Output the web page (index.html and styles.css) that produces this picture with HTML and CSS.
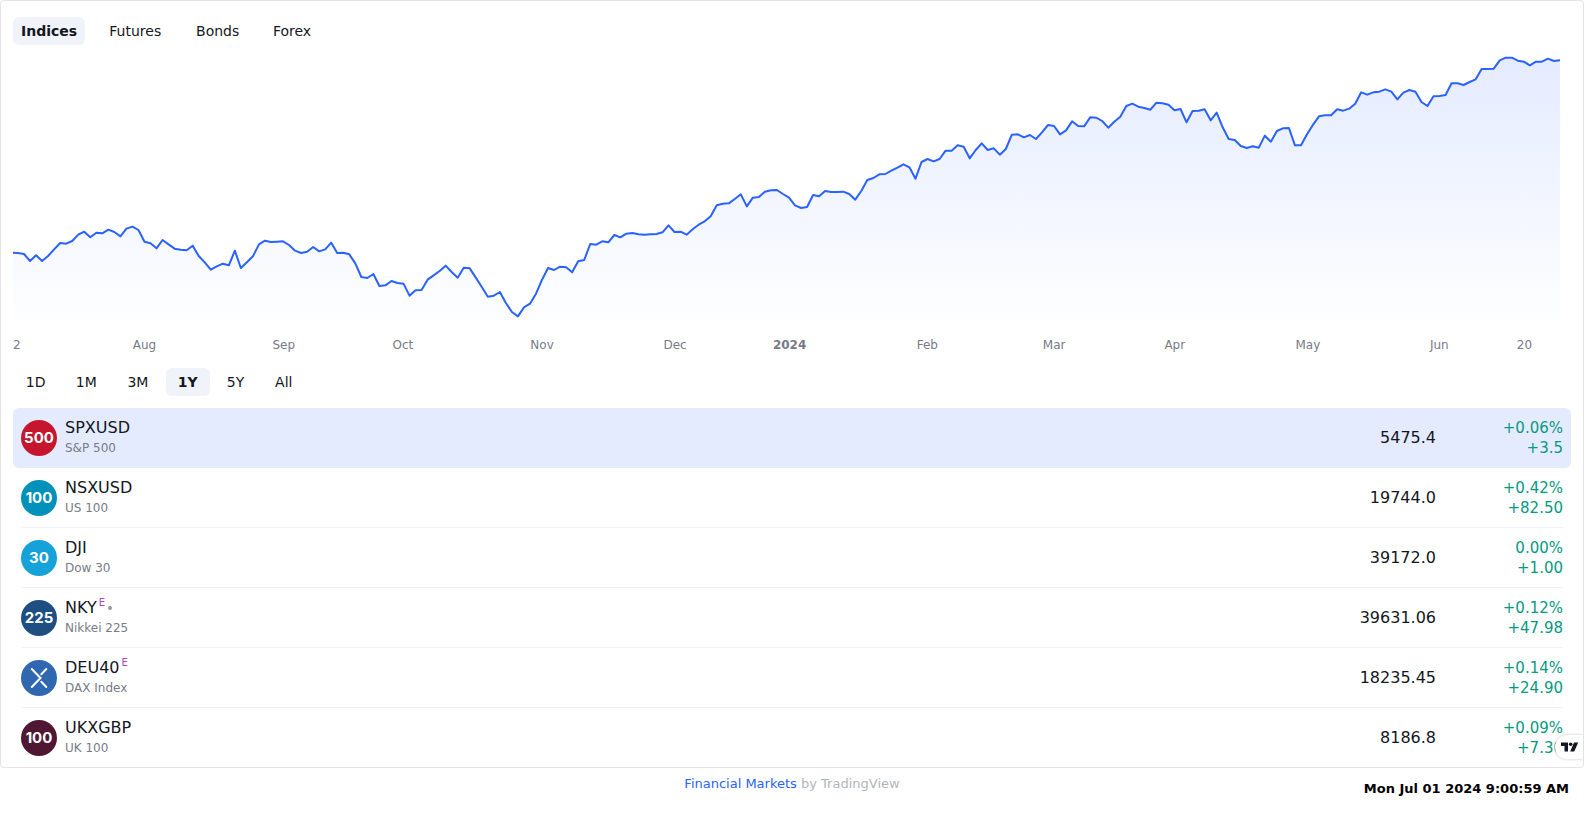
FILE: index.html
```html
<!DOCTYPE html>
<html lang="en">
<head>
<meta charset="utf-8">
<title>Financial Markets</title>
<link rel="stylesheet" href="styles.css">
</head>
<body>
<main class="widget">
  <nav class="tabs market-tabs" aria-label="Markets">
    <button class="tab is-active" data-label="Indices">Indices</button>
    <button class="tab" data-label="Futures">Futures</button>
    <button class="tab" data-label="Bonds">Bonds</button>
    <button class="tab" data-label="Forex">Forex</button>
  </nav>

  <section class="chart" aria-label="SPXUSD price">
    <svg class="plot" viewBox="0.17 135 256.83 861" preserveAspectRatio="none">
      <defs>
        <linearGradient id="fill" gradientUnits="userSpaceOnUse" x1="0" y1="135" x2="0" y2="996">
          <stop offset="0" stop-color="#2962ff" stop-opacity="0.13"/>
          <stop offset="1" stop-color="#2962ff" stop-opacity="0"/>
        </linearGradient>
      </defs>
      <path id="area" fill="url(#fill)"/>
      <path id="line" class="line"/>
    </svg>
    <svg class="axis">
      <text x="0" y="17" class="first">2</text>
      <text x="8.5%" y="17">Aug</text>
      <text x="17.5%" y="17">Sep</text>
      <text x="25.2%" y="17">Oct</text>
      <text x="34.2%" y="17">Nov</text>
      <text x="42.8%" y="17">Dec</text>
      <text x="50.2%" y="17" class="year">2024</text>
      <text x="59.1%" y="17">Feb</text>
      <text x="67.3%" y="17">Mar</text>
      <text x="75.1%" y="17">Apr</text>
      <text x="83.7%" y="17">May</text>
      <text x="92.2%" y="17">Jun</text>
      <text x="97.7%" y="17">20</text>
    </svg>
  </section>

  <div class="tabs range-tabs" role="group" aria-label="Range">
    <button class="tab" data-label="1D">1D</button>
    <button class="tab" data-label="1M">1M</button>
    <button class="tab" data-label="3M">3M</button>
    <button class="tab is-active" data-label="1Y">1Y</button>
    <button class="tab" data-label="5Y">5Y</button>
    <button class="tab" data-label="All">All</button>
  </div>

  <table class="quotes">
    <tbody>
      <tr class="is-active">
        <td class="symbol"><span class="logo spx">500</span><span class="names"><span class="ticker">SPXUSD</span><span class="desc">S&amp;P 500</span></span></td>
        <td class="price">5475.4</td>
        <td class="change"><span>+0.06%</span><span>+3.5</span></td>
      </tr>
      <tr>
        <td class="symbol"><span class="logo nsx">100</span><span class="names"><span class="ticker">NSXUSD</span><span class="desc">US 100</span></span></td>
        <td class="price">19744.0</td>
        <td class="change"><span>+0.42%</span><span>+82.50</span></td>
      </tr>
      <tr>
        <td class="symbol"><span class="logo dji">30</span><span class="names"><span class="ticker">DJI</span><span class="desc">Dow 30</span></span></td>
        <td class="price">39172.0</td>
        <td class="change"><span>0.00%</span><span>+1.00</span></td>
      </tr>
      <tr>
        <td class="symbol"><span class="logo nky">225</span><span class="names"><span class="ticker">NKY<span class="eod">E</span><span class="dot"></span></span><span class="desc">Nikkei 225</span></span></td>
        <td class="price">39631.06</td>
        <td class="change"><span>+0.12%</span><span>+47.98</span></td>
      </tr>
      <tr>
        <td class="symbol"><span class="logo dax"><svg width="36" height="36" viewBox="0 0 36 36" fill="none" stroke="#fff" stroke-width="2" stroke-linecap="round"><path d="M10.800 9l8.700 9L10.800 27M20.300 14.200L25.300 9M20.300 21.800L25.300 27"/></svg></span><span class="names"><span class="ticker">DEU40<span class="eod">E</span></span><span class="desc">DAX Index</span></span></td>
        <td class="price">18235.45</td>
        <td class="change"><span>+0.14%</span><span>+24.90</span></td>
      </tr>
      <tr>
        <td class="symbol"><span class="logo ukx">100</span><span class="names"><span class="ticker">UKXGBP</span><span class="desc">UK 100</span></span></td>
        <td class="price">8186.8</td>
        <td class="change"><span>+0.09%</span><span>+7.30</span></td>
      </tr>
    </tbody>
  </table>

  <a class="badge" href="#" aria-label="TradingView">
    <svg width="18" height="10" viewBox="0 0 18 10" fill="#131722"><path d="M0 0.500H7V9.500H3.500V4H0zM13 0.500H17.200L13.200 9.500H9.200z"/><circle cx="9.700" cy="2.300" r="1.800"/></svg>
  </a>
</main>

<footer class="footer">
  <p class="credit"><a href="#">Financial Markets</a> by TradingView</p>
  <time class="clock" datetime="2024-07-01T09:00:59">Mon Jul 01 2024 9:00:59 AM</time>
</footer>
<script src="chart.js"></script>
</body>
</html>
```
FILE: styles.css
```css
* {
  box-sizing: border-box;
}

body {
  margin: 0;
  background: #fff;
  color: #131722;
  font-family: "DejaVu Sans", sans-serif;
  font-size: 14px;
}

.widget {
  position: relative;
  padding: 16px 12px 0;
  border: 1px solid #e0e3eb;
  border-radius: 4px;
  overflow: hidden;
}

.tabs {
  display: flex;
}

.market-tabs {
  gap: 12px;
}

.range-tabs {
  gap: 4px;
  margin-bottom: 12px;
}

.tab {
  display: flex;
  flex-direction: column;
  align-items: center;
  height: 28px;
  padding: 0 8px;
  border: 0;
  border-radius: 6px;
  background: none;
  color: inherit;
  font: inherit;
  line-height: 28px;
  cursor: pointer;
}

.range-tabs .tab {
  padding: 0 12px;
}

/* Reserves the bold width so that tabs keep their place when selected */
.tab::after {
  content: attr(data-label);
  height: 0;
  overflow: hidden;
  visibility: hidden;
  font-weight: 700;
}

.tab.is-active {
  background: #f0f3fa;
  font-weight: 700;
}

.chart {
  margin-right: 11px;
}

.plot {
  display: block;
  width: 100%;
  height: 287px;
}

.line {
  fill: none;
  stroke: #2962ff;
  stroke-width: 2px;
  stroke-linejoin: round;
  vector-effect: non-scaling-stroke;
}

.axis {
  display: block;
  width: 100%;
  height: 36px;
  overflow: visible;
  fill: #787b86;
  font-size: 12px;
  text-anchor: middle;
}

.axis .first {
  text-anchor: start;
}

.axis .year {
  font-weight: 700;
}

.quotes,
.quotes tbody {
  display: block;
}

.quotes tr {
  display: grid;
  grid-template-columns: 1fr auto 127px;
  align-items: center;
  height: 60px;
  margin: 0 8px;
  border-bottom: 1px solid #f0f3fa;
}

.quotes tr.is-active {
  margin: 0;
  padding: 0 8px;
  border-color: #e5ebff;
  border-radius: 6px;
  background: #e5ebff;
}

.quotes tr:last-child {
  height: 59px;
  border-bottom: 0;
}

.quotes td {
  padding: 0;
}

.symbol {
  display: flex;
  align-items: center;
  gap: 8px;
}

.logo {
  display: flex;
  align-items: center;
  justify-content: center;
  width: 36px;
  height: 36px;
  border-radius: 50%;
  color: #fff;
  font: 700 15px Inter, sans-serif;
}

.spx { background: #c5162e; }
.nsx { background: #0091ba; }
.dji { background: #14a2d8; }
.nky { background: #1e4f82; }
.dax { background: #2f67b1; }
.ukx { background: #501732; }

.names {
  display: flex;
  flex-direction: column;
}

.ticker {
  display: flex;
  align-items: center;
  font-size: 16px;
  line-height: 20px;
}

.eod {
  align-self: flex-start;
  padding-left: 2px;
  color: #ab47bc;
  font-size: 10px;
  line-height: 10px;
}

.dot {
  width: 4px;
  height: 4px;
  margin-left: 3px;
  border-radius: 50%;
  background: #9598a1;
}

.desc {
  color: #787b86;
  font-size: 12px;
  line-height: 20px;
}

.price {
  font-size: 16px;
  text-align: right;
}

.change {
  display: flex;
  flex-direction: column;
  color: #089981;
  font-size: 15px;
  line-height: 20px;
  text-align: right;
}

.badge {
  position: absolute;
  right: 0;
  bottom: 8px;
  display: flex;
  align-items: center;
  height: 24px;
  padding: 0 4px 0 6px;
  border-radius: 12px 0 0 12px;
  background: #fff;
  box-shadow: 0 0 3px rgba(19, 23, 34, 0.25);
}

.footer {
  display: grid;
  grid-template-columns: 1fr auto 1fr;
  align-items: start;
  padding: 8px 15px 0;
  font-size: 13px;
  line-height: 16px;
}

.credit {
  grid-column: 2;
  margin: 0;
  color: #b2b5be;
}

.credit a {
  color: #2962ff;
  text-decoration: none;
}

.clock {
  justify-self: end;
  padding-top: 5px;
  color: #000;
  font-weight: 700;
}
```
FILE: chart.js
```js
// One value per session, measured down from the top of the plot's scale.
const series = [
  758, 759, 762, 783, 766, 783, 768, 748, 729, 731, 723, 704, 695, 712, 698, 700,
  689, 696, 709, 686, 680, 690, 725, 730, 745, 720, 733, 746, 749, 751, 737, 768,
  787, 809, 799, 791, 796, 752, 804, 787, 769, 733, 722, 726, 725, 724, 735, 752,
  759, 755, 741, 754, 748, 728, 759, 758, 763, 790, 831, 834, 822, 858, 856, 843,
  849, 851, 887, 871, 870, 839, 826, 813, 797, 816, 833, 803, 805, 833, 861, 890,
  887, 876, 909, 936, 949, 922, 911, 881, 839, 804, 810, 800, 802, 817, 784, 780,
  732, 734, 724, 727, 705, 712, 701, 699, 703, 704, 703, 702, 697, 676, 696, 695,
  704, 688, 674, 664, 649, 616, 611, 610, 597, 583, 619, 593, 591, 575, 571, 570,
  582, 593, 616, 624, 621, 585, 589, 573, 576, 576, 575, 582, 599, 573, 540, 534,
  523, 522, 512, 503, 493, 502, 536, 486, 477, 484, 477, 452, 452, 436, 440, 475,
  450, 430, 450, 445, 464, 447, 404, 403, 412, 405, 417, 397, 375, 378, 403, 391,
  364, 378, 379, 352, 353, 363, 383, 365, 350, 318, 311, 320, 324, 329, 308, 310,
  314, 331, 327, 367, 333, 332, 328, 361, 338, 382, 417, 420, 438, 444, 439, 443,
  407, 425, 393, 385, 384, 436, 436, 403, 374, 349, 346, 346, 328, 332, 326, 311,
  277, 284, 277, 275, 268, 275, 298, 278, 270, 275, 306, 318, 289, 288, 285, 250,
  250, 255, 246, 238, 207, 207, 206, 181, 173, 173, 182, 185, 196, 185, 185, 176,
  183, 181
];

const line = series.map((y, i) => `${i ? "L" : "M"}${i} ${y}`).join("");
document.getElementById("line").setAttribute("d", line);
document.getElementById("area").setAttribute("d", `${line}V996H0Z`);
```
